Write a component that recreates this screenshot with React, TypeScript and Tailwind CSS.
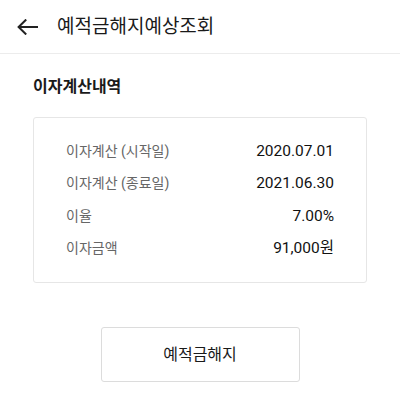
import React from "react";

const rows = [
  { label: "이자계산 (시작일)", value: "2020.07.01" },
  { label: "이자계산 (종료일)", value: "2021.06.30" },
  { label: "이율", value: "7.00%" },
  { label: "이자금액", value: "91,000원" },
];

export default function App() {
  return (
    <div
      className="w-[400px] h-[404px] bg-white overflow-hidden"
      style={{ fontFamily: '"Roboto", "Noto Sans CJK KR", sans-serif' }}
    >
      <div className="h-[54px] flex items-center border-b border-[#ececec]">
        <div className="ml-[17px] w-[21px] h-[16px] flex items-center">
          <svg width="21" height="16" viewBox="0 0 21 16" fill="none">
            <path d="M20.5 8H2M8.5 1.2L1.6 8l6.9 6.8" stroke="#222" strokeWidth="2" strokeLinecap="square" />
          </svg>
        </div>
        <div className="ml-[19px] text-[19px] text-[#1a1a1a] leading-none">예적금해지예상조회</div>
      </div>
      <div className="px-[33px]">
        <div className="pt-[23px] text-[16px] font-bold text-[#1a1a1a] leading-[20px]">이자계산내역</div>
        <div className="mt-[20px] border border-[#e6e6e6] rounded-[3px] px-[32px] py-[17px]">
          {rows.map((r) => (
            <div key={r.label} className="h-[32.5px] flex items-center justify-between">
              <span className="text-[14px] text-[#666]">{r.label}</span>
              <span className="text-[15.5px] text-[#111]">{r.value}</span>
            </div>
          ))}
        </div>
      </div>
      <div className="flex justify-center mt-[44px]">
        <button className="w-[199px] h-[55px] border border-[#dcdcdc] rounded-[3px] bg-white text-[16px] text-[#1a1a1a]">
          예적금해지
        </button>
      </div>
    </div>
  );
}
